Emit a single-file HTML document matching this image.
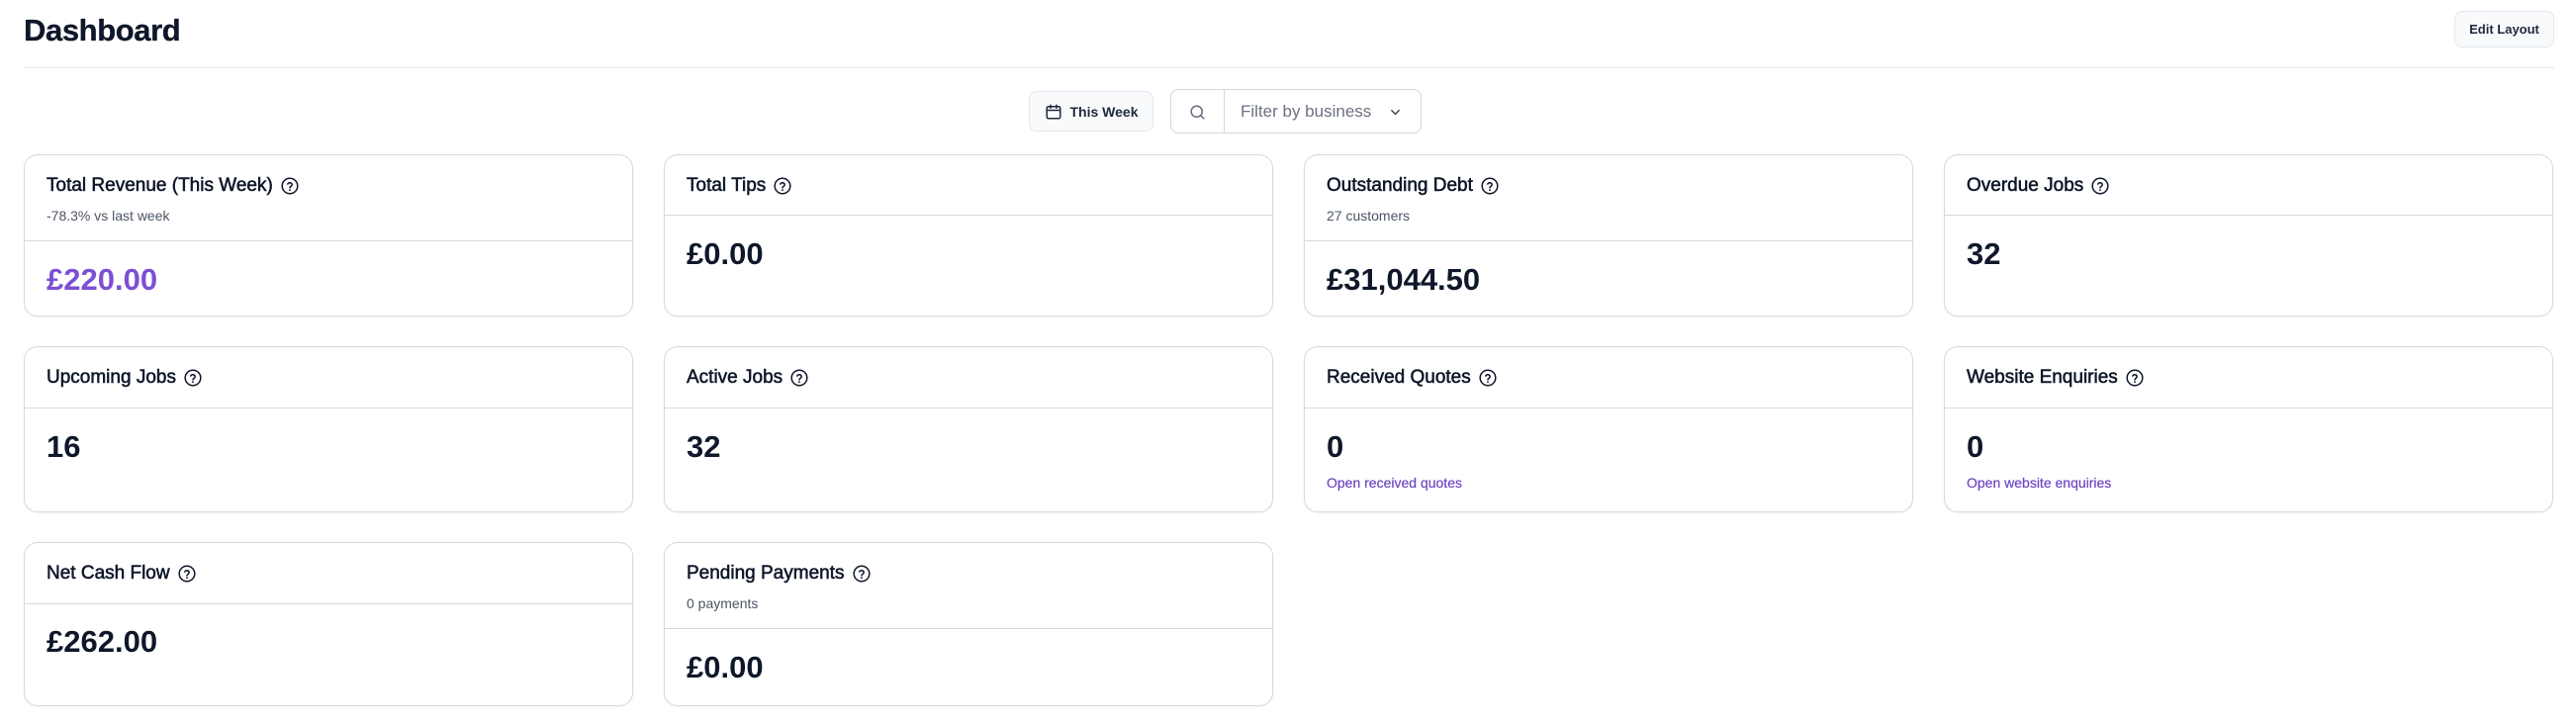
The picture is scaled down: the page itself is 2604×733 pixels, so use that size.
<!DOCTYPE html>
<html><head><meta charset="utf-8"><style>
*{box-sizing:border-box;margin:0;padding:0}
body{width:2604px;height:733px;background:#fff;font-family:"Liberation Sans",sans-serif;color:#0f172a;position:relative;overflow:hidden}
.h1{position:absolute;left:24px;top:11px;font-size:31px;font-weight:600;-webkit-text-stroke:0.3px #0f172a;letter-spacing:-0.4px;line-height:40px}
.hr{position:absolute;left:24px;right:22px;top:68px;height:1px;background:#e5e7eb}
.btn{position:absolute;border:1px solid #e2e8f0;background:#f8fafc;border-radius:8px;font-size:14px;font-weight:700;color:#1e293b;display:flex;align-items:center;justify-content:center}
.filter{position:absolute;left:1183px;top:90px;width:254px;height:45px;border:1px solid #d4d7dd;border-radius:8px;background:#fff}
.filter .div{position:absolute;left:53px;top:0;bottom:0;width:1px;background:#d4d7dd}
.filter .t{position:absolute;left:70px;top:12px;font-size:17px;color:#6b7280}
.card{position:absolute;width:616px;border:1px solid #d7d9de;border-radius:14px;background:#fff;box-shadow:0 1px 2px rgba(0,0,0,.05)}
.hd{border-bottom:1px solid #d7d9de;padding:0 22px;position:relative}
.tt{position:absolute;left:22px;top:19px;font-size:19px;-webkit-text-stroke:0.55px #0f172a;line-height:24px;display:flex;align-items:center;white-space:nowrap}
.tt svg{margin-left:8px}
.sub{position:absolute;left:22px;top:52px;font-size:14px;color:#4b5563;line-height:18px}
.val{position:absolute;left:22px;font-size:31px;font-weight:700;line-height:36px}
.lnk{position:absolute;left:22px;font-size:14px;color:#6b46c1;line-height:18px;-webkit-text-stroke:0.2px #6b46c1}
</style></head><body>
<div class="h1">Dashboard</div>
<div class="btn" style="left:2481px;top:11px;width:101px;height:37px;font-size:13px">Edit Layout</div>
<div class="hr"></div>

<div class="btn" style="left:1040px;top:92px;width:126px;height:41px;gap:8px">
<svg width="18" height="18" viewBox="0 0 24 24" fill="none" stroke="#1e293b" stroke-width="2" stroke-linecap="round"><rect x="3" y="5" width="18" height="16" rx="2"/><path d="M8 3v4M16 3v4M3 10h18"/></svg>This Week</div>
<div class="filter"><svg style="position:absolute;left:17px;top:13px" width="19" height="19" viewBox="0 0 24 24" fill="none" stroke="#6b7280" stroke-width="2" stroke-linecap="round"><circle cx="11" cy="11" r="7"/><path d="M20 20l-4-4"/></svg><div class="div"></div><div class="t">Filter by business</div><svg style="position:absolute;left:219px;top:15px" width="15" height="15" viewBox="0 0 24 24" fill="none" stroke="#374151" stroke-width="2.2" stroke-linecap="round"><path d="M6 9l6 6 6-6"/></svg></div>

<svg width="0" height="0" style="position:absolute"><defs><g id="q"><circle cx="9" cy="9" r="7.8" fill="none" stroke="#0f172a" stroke-width="1.5"/><path d="M6.8 7.1a2.3 2.3 0 0 1 4.4.7c0 1.5-2.2 1.8-2.2 3.1" fill="none" stroke="#0f172a" stroke-width="1.5" stroke-linecap="round"/><circle cx="9" cy="13.2" r=".9" fill="#0f172a"/></g></defs></svg>

<div class="card" style="left:24px;top:156px;height:164px"><div class="hd" style="height:87px"><div class="tt">Total Revenue (This Week)<svg width="18" height="18"><use href="#q"/></svg></div><div class="sub">-78.3% vs last week</div></div><div class="val" style="top:108px;color:#7c4fd3">£220.00</div></div>
<div class="card" style="left:671px;top:156px;height:164px"><div class="hd" style="height:61px"><div class="tt">Total Tips<svg width="18" height="18"><use href="#q"/></svg></div></div><div class="val" style="top:82px">£0.00</div></div>
<div class="card" style="left:1318px;top:156px;height:164px"><div class="hd" style="height:87px"><div class="tt">Outstanding Debt<svg width="18" height="18"><use href="#q"/></svg></div><div class="sub">27 customers</div></div><div class="val" style="top:108px">£31,044.50</div></div>
<div class="card" style="left:1965px;top:156px;height:164px"><div class="hd" style="height:61px"><div class="tt">Overdue Jobs<svg width="18" height="18"><use href="#q"/></svg></div></div><div class="val" style="top:82px">32</div></div>

<div class="card" style="left:24px;top:350px;height:168px"><div class="hd" style="height:62px"><div class="tt">Upcoming Jobs<svg width="18" height="18"><use href="#q"/></svg></div></div><div class="val" style="top:83px">16</div></div>
<div class="card" style="left:671px;top:350px;height:168px"><div class="hd" style="height:62px"><div class="tt">Active Jobs<svg width="18" height="18"><use href="#q"/></svg></div></div><div class="val" style="top:83px">32</div></div>
<div class="card" style="left:1318px;top:350px;height:168px"><div class="hd" style="height:62px"><div class="tt">Received Quotes<svg width="18" height="18"><use href="#q"/></svg></div></div><div class="val" style="top:83px">0</div><div class="lnk" style="top:128px">Open received quotes</div></div>
<div class="card" style="left:1965px;top:350px;height:168px"><div class="hd" style="height:62px"><div class="tt">Website Enquiries<svg width="18" height="18"><use href="#q"/></svg></div></div><div class="val" style="top:83px">0</div><div class="lnk" style="top:128px">Open website enquiries</div></div>

<div class="card" style="left:24px;top:548px;height:166px"><div class="hd" style="height:62px"><div class="tt">Net Cash Flow<svg width="18" height="18"><use href="#q"/></svg></div></div><div class="val" style="top:82px">£262.00</div></div>
<div class="card" style="left:671px;top:548px;height:166px"><div class="hd" style="height:87px"><div class="tt">Pending Payments<svg width="18" height="18"><use href="#q"/></svg></div><div class="sub">0 payments</div></div><div class="val" style="top:108px">£0.00</div></div>
</body></html>
